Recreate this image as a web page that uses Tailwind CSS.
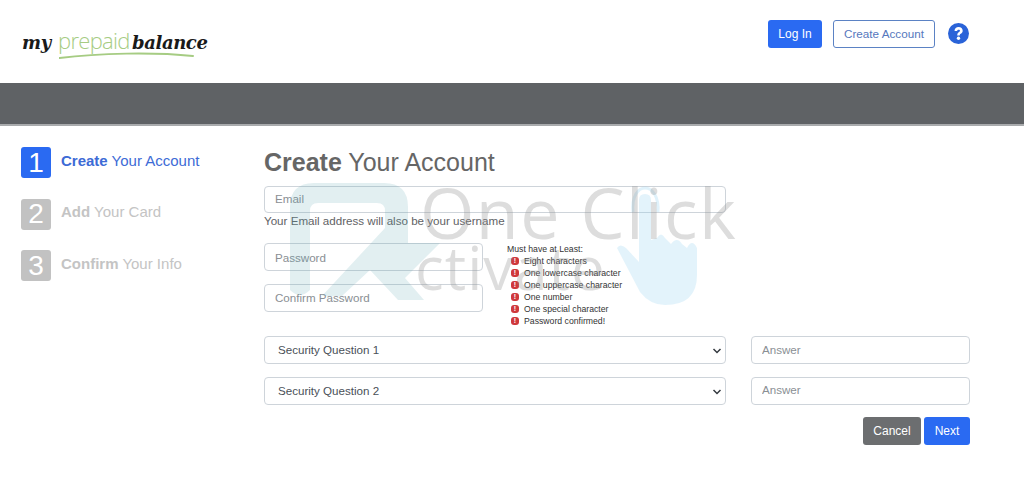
<!DOCTYPE html>
<html>
    <head>
        <title>My Prepaid Balance</title>
        <script src="https://cdn.jsdelivr.net/npm/@tailwindcss/browser@4"></script>
    </head>
    <body class="bg-white font-['Liberation_Sans',Arial,sans-serif] text-[#495057] overflow-hidden">
        <div class="relative w-[1024px] h-[488px] overflow-hidden">
            <!-- header -->
            <header class="h-[83px] flex items-start justify-between bg-white">
                <div class="relative w-[200px] h-[50px] ml-[22px] mt-[20px]">
                    <div class="flex items-baseline leading-none pt-[9px]">
                        <span class="w-[36px] font-['DejaVu_Serif',serif] italic font-bold text-[18px] tracking-[-0.4px] text-[#1a1a1a]">my</span>
                        <span class="w-[74px] font-['Open_Sans',sans-serif] font-light text-[22px] tracking-[-0.7px] text-[#a6cc83]">prepaid</span>
                        <span class="font-['DejaVu_Serif',serif] italic font-bold text-[18px] tracking-[-0.4px] text-[#1a1a1a]">balance</span>
                    </div>
                    <svg class="absolute left-[37px] top-[30px]" width="136" height="12" viewBox="0 0 136 12" fill="none">
                        <path d="M0.5 8C40 3 95 2 134 6" stroke="#a6cc83" stroke-width="2" stroke-linecap="round" />
                    </svg>
                </div>
                <div class="flex items-center mt-[20px] mr-[55px]">
                    <button class="h-[28px] w-[54px] rounded-[3px] bg-[#2a6af2] text-white text-[12px]">Log In</button>
                    <button class="h-[28px] w-[102px] ml-[11px] rounded-[3px] border border-[#5b82c4] bg-white text-[#5677bd] text-[11.7px]">Create Account</button>
                    <svg class="ml-[13px] mb-[2px]" width="21" height="21" viewBox="0 0 20 20">
                        <circle cx="10" cy="10" r="10" fill="#2a63d8" />
                        <path d="M6.2 7.6C6.3 5.3 7.9 3.9 10.1 3.9C12.4 3.9 14 5.3 14 7.3C14 8.7 13.3 9.5 12.2 10.2C11.4 10.7 11.2 11 11.2 11.9H8.8C8.8 10.3 9.2 9.5 10.3 8.8C11 8.3 11.4 8 11.4 7.4C11.4 6.8 10.9 6.4 10.1 6.4C9.3 6.4 8.8 6.9 8.7 7.6Z" fill="white" />
                        <circle cx="10" cy="14.5" r="1.6" fill="white" />
                    </svg>
                </div>
            </header>
            <div class="h-[41px] bg-[#5f6265]"></div>
            <div class="h-[2px] bg-[#a9abad]"></div>

            <main class="flex">
                <!-- steps -->
                <aside class="w-[264px] pl-[21px] pt-[21px] flex flex-col gap-[20.5px] shrink-0">
                    <div class="flex items-center h-[31px]">
                        <div class="w-[30px] h-[31px] rounded-[3px] bg-[#2a6af2] text-white text-[28px] flex items-center justify-center">1</div>
                        <div class="ml-[10px] text-[15px] text-[#3d6bd6] mb-[3px]"><b>Create</b> Your Account</div>
                    </div>
                    <div class="flex items-center h-[31px]">
                        <div class="w-[30px] h-[31px] rounded-[3px] bg-[#c2c2c2] text-white text-[28px] flex items-center justify-center">2</div>
                        <div class="ml-[10px] text-[15px] text-[#c4c4c4] mb-[3px]"><b>Add</b> Your Card</div>
                    </div>
                    <div class="flex items-center h-[31px]">
                        <div class="w-[30px] h-[31px] rounded-[3px] bg-[#c2c2c2] text-white text-[28px] flex items-center justify-center">3</div>
                        <div class="ml-[10px] text-[15px] text-[#c4c4c4] mb-[3px]"><b>Confirm</b> Your Info</div>
                    </div>
                </aside>

                <!-- form -->
                <section class="w-[706px] pt-[21px]">
                    <h1 class="text-[25px] leading-[30px] text-[#666]"><b>Create</b> Your Account</h1>
                    <input class="block mt-[9px] w-[462px] h-[27px] px-[10px] pb-[2px] rounded-[4px] border border-[#ced4da] text-[11.6px] placeholder:text-[#8a8f94] bg-transparent" placeholder="Email" />
                    <p class="text-[11.6px] leading-[14px] mt-[1px] text-[#5f6265]">Your Email address will also be your username</p>
                    <div class="flex mt-[15px]">
                        <div class="w-[219px] flex flex-col gap-[13px] shrink-0">
                            <input class="w-full h-[28px] px-[10px] rounded-[4px] border border-[#ced4da] text-[11.6px] placeholder:text-[#8a8f94] bg-transparent" placeholder="Password" />
                            <input class="w-full h-[28px] px-[10px] pb-[2px] rounded-[4px] border border-[#ced4da] text-[11.6px] placeholder:text-[#8a8f94] bg-transparent" placeholder="Confirm Password" />
                        </div>
                        <div class="ml-[24px] text-[8.7px] leading-[12px] text-[#333]">
                            <div>Must have at Least:</div>
                            <ul>
                                <li class="flex items-center"><span class="ml-[4px] mr-[5px] w-[8px] h-[8px] rounded-[3px] bg-[#cf383c] text-white text-[7px] font-bold leading-[8px] text-center">!</span>Eight characters</li>
                                <li class="flex items-center"><span class="ml-[4px] mr-[5px] w-[8px] h-[8px] rounded-[3px] bg-[#cf383c] text-white text-[7px] font-bold leading-[8px] text-center">!</span>One lowercase character</li>
                                <li class="flex items-center"><span class="ml-[4px] mr-[5px] w-[8px] h-[8px] rounded-[3px] bg-[#cf383c] text-white text-[7px] font-bold leading-[8px] text-center">!</span>One uppercase character</li>
                                <li class="flex items-center"><span class="ml-[4px] mr-[5px] w-[8px] h-[8px] rounded-[3px] bg-[#cf383c] text-white text-[7px] font-bold leading-[8px] text-center">!</span>One number</li>
                                <li class="flex items-center"><span class="ml-[4px] mr-[5px] w-[8px] h-[8px] rounded-[3px] bg-[#cf383c] text-white text-[7px] font-bold leading-[8px] text-center">!</span>One special character</li>
                                <li class="flex items-center"><span class="ml-[4px] mr-[5px] w-[8px] h-[8px] rounded-[3px] bg-[#cf383c] text-white text-[7px] font-bold leading-[8px] text-center">!</span>Password confirmed!</li>
                            </ul>
                        </div>
                    </div>
                    <div class="flex mt-[9px]">
                        <div class="relative w-[462px] h-[28px] rounded-[4px] border border-[#ced4da] px-[13px] text-[11.6px] leading-[25px] text-[#495057]">
                            Security Question 1
                            <svg class="absolute right-[3px] top-[10px]" width="10" height="8" viewBox="0 0 10 8" fill="none"><path d="M1.5 2L5 5.5L8.5 2" stroke="#343a40" stroke-width="1.5" /></svg>
                        </div>
                        <input class="ml-[25px] w-[219px] h-[28px] px-[10px] pb-[2px] rounded-[4px] border border-[#ced4da] text-[11.6px] placeholder:text-[#8a8f94]" placeholder="Answer" />
                    </div>
                    <div class="flex mt-[13px]">
                        <div class="relative w-[462px] h-[28px] rounded-[4px] border border-[#ced4da] px-[13px] text-[11.6px] leading-[25px] text-[#495057]">
                            Security Question 2
                            <svg class="absolute right-[3px] top-[10px]" width="10" height="8" viewBox="0 0 10 8" fill="none"><path d="M1.5 2L5 5.5L8.5 2" stroke="#343a40" stroke-width="1.5" /></svg>
                        </div>
                        <input class="ml-[25px] w-[219px] h-[28px] px-[10px] pb-[3px] rounded-[4px] border border-[#ced4da] text-[11.6px] placeholder:text-[#8a8f94]" placeholder="Answer" />
                    </div>
                    <div class="flex justify-end gap-[3px] mt-[12px]">
                        <button class="w-[58px] h-[28px] rounded-[3px] bg-[#6c6e70] text-white text-[12px]">Cancel</button>
                        <button class="w-[46px] h-[28px] rounded-[3px] bg-[#2a6af2] text-white text-[12px]">Next</button>
                    </div>
                </section>
            </main>

            <!-- watermark over the form -->
            <div class="absolute left-0 top-0 w-full h-full pointer-events-none">
                <svg class="absolute left-0 top-0" width="1024" height="488" viewBox="0 0 1024 488" fill="none">
                    <path d="M290 290V207Q290 183 314 183H384Q408 183 408 207V243H440L405 278L424 300H398L370 270L342 296H322L385 228V211Q385 203 377 203H318Q310 203 310 211V290Q300 300 290 290Z" fill="#5fa8b4" fill-opacity="0.18" />
                    <path d="M633 212C630 180 660 180 658 212" stroke="#8fd0ef" stroke-opacity="0.28" stroke-width="3" />
                    <path d="M617 248Q620 243 626 248L639 262V200Q639 194 645 194Q651 194 651 200V240L657 238Q661 231 665 238L671 244Q677 236 682 244L687 248Q692 238 697 248V275Q697 305 665 305Q650 305 640 292Z" fill="#8fd0ef" fill-opacity="0.25" />
                </svg>
                <div class="absolute left-[420px] top-[174px] font-['Open_Sans',sans-serif] text-[70px] leading-[76px] tracking-[1.4px] text-[#909090]/30 whitespace-nowrap">One Click</div>
                <div class="absolute left-[415px] top-[232px] font-['Open_Sans',sans-serif] text-[60px] leading-[70px] tracking-[1px] text-[#909090]/30 whitespace-nowrap">ctivate</div>
            </div>
        </div>
    </body>
</html>
